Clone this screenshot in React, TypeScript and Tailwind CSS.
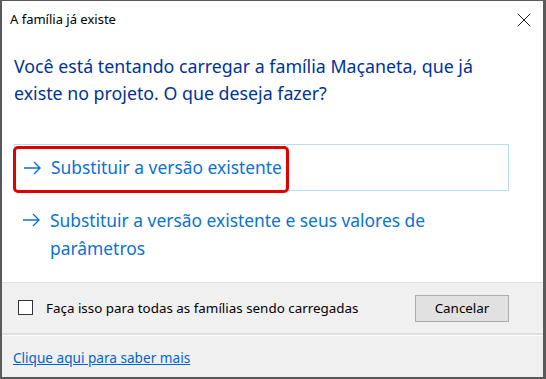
import { X } from 'lucide-react';

function Arrow() {
  return (
    <svg width="19" height="14" viewBox="0 0 19 14" className="shrink-0">
      <path d="M1 7h16M11 1l6 6-6 6" fill="none" stroke="currentColor" strokeWidth="1.4" />
    </svg>
  );
}

export default function App() {
  return (
    <div
      className="w-[546px] h-[379px] border-l-2 border-t border-r-[3px] border-b-2 border-[#5a5a5a] bg-white flex flex-col overflow-hidden"
      style={{ fontFamily: '"Noto Sans", "Open Sans", sans-serif' }}
    >
      {/* Title bar */}
      <div className="h-[38px] flex items-center justify-between pl-2 pr-[7px]">
        <span className="text-[13px] text-black">A família já existe</span>
        <X size={24} strokeWidth={0.9} className="text-black" />
      </div>

      {/* Main instruction */}
      <div className="px-3 pt-[14px] text-[17.8px] leading-[27px] text-[#003399] pr-10">
        Você está tentando carregar a família Maçaneta, que já existe no projeto. O que deseja fazer?
      </div>

      {/* Command links */}
      <div className="pl-3 pr-[34px] pt-[37px] flex flex-col">
        <div className="relative h-[47px] border border-[#b9dcf5] flex items-center gap-[9px] pl-2 text-[17.4px] text-[#0a72d2]">
          <Arrow />
          <span>Substituir a versão existente</span>
          <div className="absolute left-[-2px] top-[1px] w-[276px] h-[47px] border-[3px] border-[#e00000] rounded-[5px]" />
        </div>
        <div className="flex gap-[9px] pl-2 pt-[15px] text-[17.4px] leading-[28px] text-[#0a72d2]">
          <div className="pt-[7px]">
            <Arrow />
          </div>
          <span>
            Substituir a versão existente e seus valores de
            <br />
            parâmetros
          </span>
        </div>
      </div>

      <div className="flex-1" />

      {/* Footer */}
      <div className="border-t border-[#dfdfdf] bg-[#f0f0f0] h-[51px] flex items-center justify-between pl-4 pr-[34px]">
        <label className="flex items-center gap-[13px] text-[13.4px] text-black">
          <span className="w-[15px] h-[15px] border border-[#333] bg-white" />
          Faça isso para todas as famílias sendo carregadas
        </label>
        <button className="w-[94px] h-[27px] bg-[#e1e1e1] border border-[#adadad] text-[13.4px] text-black">
          Cancelar
        </button>
      </div>
      <div className="border-t-2 border-[#dfdfdf] border-b border-b-white" />
      <div className="bg-[#f0f0f0] h-[41px] flex items-center pl-[11px] pt-[3px]">
        <a className="text-[13.6px] text-[#0066cc] underline">Clique aqui para saber mais</a>
      </div>
    </div>
  );
}
